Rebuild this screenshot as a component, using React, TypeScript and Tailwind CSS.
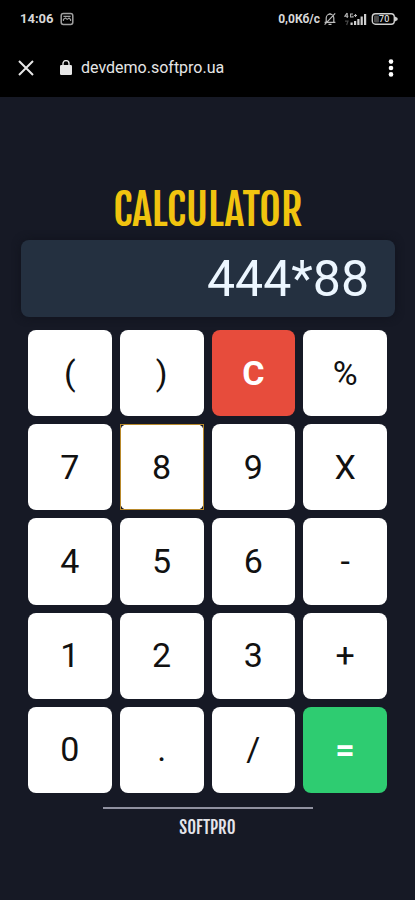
import { useState } from "react";

type Key = { label: string; name: string; tone?: "clear" | "equals"; focused?: boolean };

const KEYS: Key[] = [
  { label: "(", name: "Open bracket" },
  { label: ")", name: "Close bracket" },
  { label: "C", name: "Clear", tone: "clear" },
  { label: "%", name: "Percent" },
  { label: "7", name: "7" },
  { label: "8", name: "8", focused: true },
  { label: "9", name: "9" },
  { label: "X", name: "Multiply" },
  { label: "4", name: "4" },
  { label: "5", name: "5" },
  { label: "6", name: "6" },
  { label: "-", name: "Subtract" },
  { label: "1", name: "1" },
  { label: "2", name: "2" },
  { label: "3", name: "3" },
  { label: "+", name: "Add" },
  { label: "0", name: "0" },
  { label: ".", name: "Decimal point" },
  { label: "/", name: "Divide" },
  { label: "=", name: "Equals", tone: "equals" },
];

const TONES = {
  plain: "bg-white text-[#111111]",
  clear: "bg-[#e74c3c] text-white font-bold",
  equals: "bg-[#2ecc71] text-white font-bold",
};

function StatusBar() {
  return (
    <div className="flex h-[38px] items-center justify-between pr-[17px] pl-5 text-[#d8d8d8]">
      <div className="flex items-center gap-1.5">
        <span className="text-[13px] font-bold">14:06</span>
        <svg className="size-3.5" viewBox="0 0 14 14" fill="none" stroke="#a0a0a0" strokeWidth="1.5">
          <rect x="1.2" y="1.6" width="11.6" height="10.8" rx="2.2" />
          <path d="M3.4 4.4h7.2M3.4 9V7.4L5.6 6l1.6 1.4L9 6l1.6 1.6V9" strokeWidth="1.1" />
        </svg>
      </div>
      <div className="flex items-center">
        <span className="text-xs font-bold">0,0Кб/с</span>
        <svg className="ml-1 h-3.5 w-3" viewBox="0 0 12 14" fill="none" stroke="#bdbdbd" strokeWidth="1.2">
          <path d="M2.2 10V6a3.8 3.8 0 0 1 7.6 0v4M.6 10.4h10.8M4.5 12.4h3M6 2.4V1M.6 12.6 11.2 1.4" />
        </svg>
        <svg className="ml-2 h-3.5 w-[23px]" viewBox="0 0 23 14" fill="#cfcfcf">
          <path d="M6.5 10.6h2.2V13H6.5zM10 9h2.2v4H10zM13.3 7h2.2v6h-2.2zM16.6 4.5h2.2V13h-2.2zM20 2h2.2v11H20z" />
          <path d="M3 1 .8 4.3h3.6M3.2 1v5M9 2H6.6v3H9V3.8M10 3.5h3M11.5 2v3" fill="none" stroke="#b5b5b5" strokeWidth="1.1" />
          <path d="M1 9.2h3L2.6 13" fill="none" stroke="#484848" strokeWidth="1.2" />
        </svg>
        <svg className="ml-1 h-3.5 w-[27px]" viewBox="0 0 27 14">
          <rect x="1.3" y="1.7" width="22" height="10.6" rx="3.2" fill="none" stroke="#cfcfcf" strokeWidth="1.4" />
          <path d="M24 4.4 26.6 6v2L24 9.6z" fill="#cfcfcf" />
          <rect x="3" y="3.4" width="5" height="7.2" rx="1" fill="#4a4a4a" />
          <text x="13.2" y="10.3" textAnchor="middle" fontSize="9" fontWeight="500" fill="#d8d8d8">70</text>
        </svg>
      </div>
    </div>
  );
}

function BrowserBar() {
  return (
    <div className="flex h-[59px] items-center pr-4 pl-[18px] text-[#e6e6e6]">
      <button type="button" aria-label="Close tab">
        <svg className="size-4" viewBox="0 0 16 16" fill="none" stroke="currentColor" strokeWidth="2">
          <path d="M1 1l14 14M15 1 1 15" />
        </svg>
      </button>
      <svg className="ml-[26px] h-4 w-3" viewBox="0 0 12 16" fill="none">
        <rect y="5" width="12" height="10" rx="1.2" fill="#e6e6e6" />
        <path d="M3 6V3.6a3 3 0 0 1 6 0V6" stroke="#e6e6e6" strokeWidth="1.4" />
      </svg>
      <span className="ml-[9px] text-base">devdemo.softpro.ua</span>
      <button type="button" aria-label="Menu" className="ml-auto">
        <svg className="h-5 w-4" viewBox="0 0 16 20" fill="#ffffff">
          <circle cx="8" cy="3.6" r="2.3" />
          <circle cx="8" cy="10" r="2.3" />
          <circle cx="8" cy="16.4" r="2.3" />
        </svg>
      </button>
    </div>
  );
}

export default function App() {
  const [value, setValue] = useState("444*88");

  return (
    <div className="flex min-h-screen flex-col bg-[#161925] font-['Roboto',sans-serif]">
      <header className="bg-black">
        <StatusBar />
        <BrowserBar />
      </header>
      <main className="flex flex-col pt-[83px] pr-5 pl-[21px]">
        <h1 className="flex h-15 items-center justify-center font-['Fjalla_One','Roboto_Condensed','Liberation_Sans_Narrow','Roboto',sans-serif] text-[42px] font-normal text-[#f1c40f]">
          CALCULATOR
        </h1>
        <input
          aria-label="Expression"
          value={value}
          onChange={(event) => setValue(event.target.value)}
          className="h-[77px] w-full rounded-lg bg-[#243040] px-[26px] text-right text-[50px] text-[#ecf6ff] shadow-[0_0_8px_#10131c]"
        />
        <div className="mt-3 grid h-116 grid-cols-4 grid-rows-5 gap-2 pt-px pr-2 pl-[7px]">
          {KEYS.map((key) => (
            <button
              key={key.label}
              type="button"
              aria-label={key.name}
              className={`relative flex items-center justify-center rounded-lg text-[34px] ${TONES[key.tone ?? "plain"]}`}
            >
              {key.label}
              {key.focused && <span className="absolute inset-0 border border-solid border-[#b8892b]" />}
            </button>
          ))}
        </div>
      </main>
      <footer className="mx-auto mt-3.5 w-[210px] border-t-2 border-[#9091a0] pt-1.5 text-center font-['Fjalla_One','Roboto_Condensed','Liberation_Sans_Narrow','Roboto',sans-serif] text-[17px] font-normal text-[#e4e4ea]">
        SOFTPRO
      </footer>
    </div>
  );
}
